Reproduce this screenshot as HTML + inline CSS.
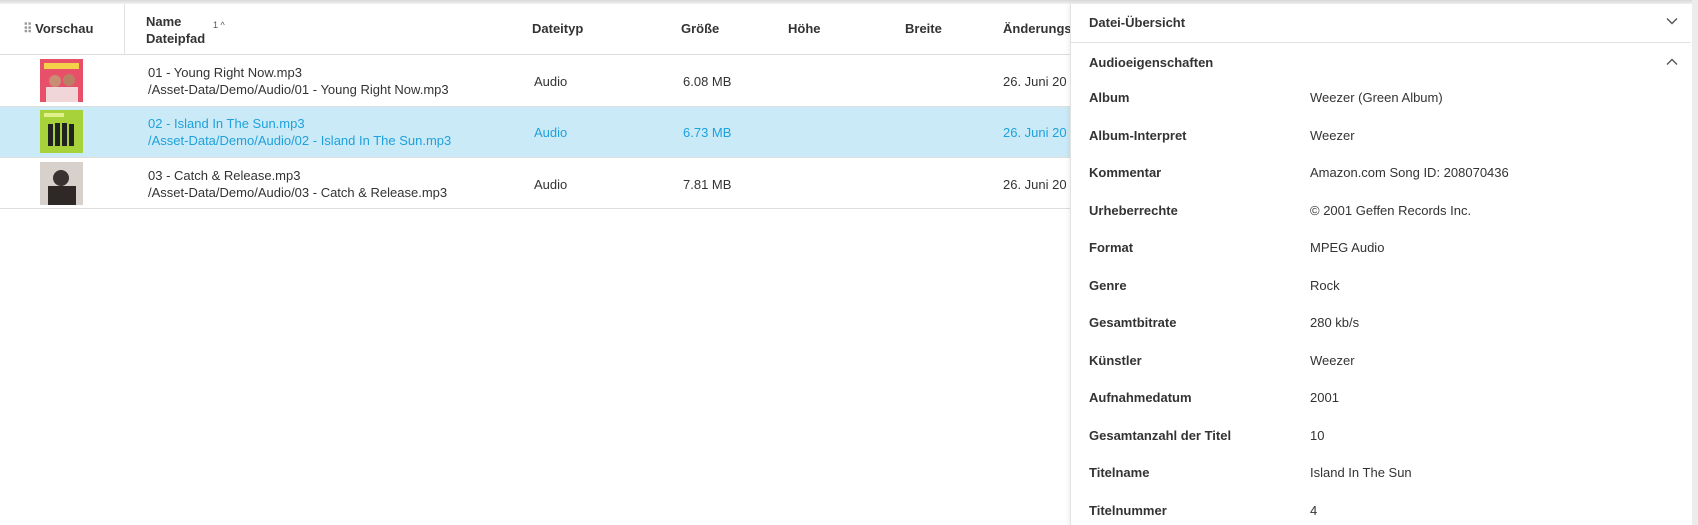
<!DOCTYPE html>
<html><head><meta charset="utf-8"><style>
*{box-sizing:border-box;margin:0;padding:0}
body{width:1698px;height:525px;overflow:hidden;background:#fff;font-family:"Liberation Sans",sans-serif;font-size:13px;color:#333;position:relative}
.top{position:absolute;left:0;top:0;width:1698px;height:4px;background:linear-gradient(#d8d8d8,#f2f2f2)}
.abs{position:absolute;white-space:nowrap}
.hdr{font-weight:bold;color:#333}
.line{position:absolute;left:0;width:1070px;height:1px;background:#dedede}
.sel{position:absolute;left:0;top:107px;width:1070px;height:50px;background:#cbeaf7}
.blue{color:#1ea1dc}
.panel{position:absolute;left:1070px;top:4px;width:620px;height:521px;background:#fff;border-left:1px solid #e2e2e2;box-shadow:-2px 0 4px rgba(0,0,0,.06)}
.lbl{position:absolute;left:18px;font-weight:bold;color:#333}
.val{position:absolute;left:239px;color:#333}
.sb{position:absolute;left:1692px;top:0;width:6px;height:525px;background:#ececec}
.th{position:absolute;left:40px;width:43px;height:43px}
</style></head><body>
<div class="top"></div>
<div class="abs hdr" style="left:23px;top:21px"><span style="color:#999;letter-spacing:-1px">⠿</span> Vorschau</div>
<div style="position:absolute;left:124px;top:4px;width:1px;height:50px;background:#e2e2e2"></div>
<div class="abs hdr" style="left:146px;top:13px;line-height:17px">Name<br>Dateipfad</div>
<div class="abs" style="left:213px;top:20px;font-size:9px;color:#555">1 ^</div>
<div class="abs hdr" style="left:532px;top:21px">Dateityp</div>
<div class="abs hdr" style="left:681px;top:21px">Größe</div>
<div class="abs hdr" style="left:788px;top:21px">Höhe</div>
<div class="abs hdr" style="left:905px;top:21px">Breite</div>
<div class="abs hdr" style="left:1003px;top:21px">Änderungs</div>
<div class="line" style="top:54px"></div>
<div class="sel"></div>
<div class="line" style="top:106px"></div>
<div class="line" style="top:157px"></div>
<div class="line" style="top:208px"></div>

<svg class="th" style="top:59px" viewBox="0 0 43 43"><rect width="43" height="43" fill="#e8506a"/><rect x="4" y="4" width="35" height="6" fill="#f5d04a"/><circle cx="15" cy="22" r="6" fill="#c98d74"/><circle cx="29" cy="21" r="6" fill="#b98066"/><rect x="6" y="28" width="32" height="15" fill="#f0d6d8"/></svg>
<div class="abs" style="left:148px;top:64px;line-height:17px">01 - Young Right Now.mp3<br>/Asset-Data/Demo/Audio/01 - Young Right Now.mp3</div>
<div class="abs" style="left:534px;top:74px">Audio</div>
<div class="abs" style="left:683px;top:74px">6.08 MB</div>
<div class="abs" style="left:1003px;top:74px">26. Juni 20</div>

<svg class="th" style="top:110px" viewBox="0 0 43 43"><rect width="43" height="43" fill="#a8d23a"/><rect x="4" y="3" width="20" height="4" fill="#e0f08a"/><rect x="8" y="14" width="5" height="22" fill="#222"/><rect x="15" y="13" width="5" height="23" fill="#222"/><rect x="22" y="13" width="5" height="23" fill="#222"/><rect x="29" y="14" width="5" height="22" fill="#222"/></svg>
<div class="abs blue" style="left:148px;top:115px;line-height:17px">02 - Island In The Sun.mp3<br>/Asset-Data/Demo/Audio/02 - Island In The Sun.mp3</div>
<div class="abs blue" style="left:534px;top:125px">Audio</div>
<div class="abs blue" style="left:683px;top:125px">6.73 MB</div>
<div class="abs blue" style="left:1003px;top:125px">26. Juni 20</div>

<svg class="th" style="top:162px" viewBox="0 0 43 43"><rect width="43" height="43" fill="#d8d0ca"/><circle cx="21" cy="16" r="8" fill="#3a3230"/><rect x="8" y="24" width="28" height="19" fill="#2e2826"/></svg>
<div class="abs" style="left:148px;top:167px;line-height:17px">03 - Catch &amp; Release.mp3<br>/Asset-Data/Demo/Audio/03 - Catch &amp; Release.mp3</div>
<div class="abs" style="left:534px;top:177px">Audio</div>
<div class="abs" style="left:683px;top:177px">7.81 MB</div>
<div class="abs" style="left:1003px;top:177px">26. Juni 20</div>

<div class="panel">
<div class="lbl" style="top:11px">Datei-Übersicht</div>
<svg style="position:absolute;left:595px;top:13px" width="12" height="8" viewBox="0 0 12 8"><path d="M1 1.5L6 6.5L11 1.5" fill="none" stroke="#555" stroke-width="1.4"/></svg>
<div style="position:absolute;left:0;top:38px;width:620px;height:1px;background:#e2e2e2"></div>
<div class="lbl" style="top:51px">Audioeigenschaften</div>
<svg style="position:absolute;left:595px;top:54px" width="12" height="8" viewBox="0 0 12 8"><path d="M1 6.5L6 1.5L11 6.5" fill="none" stroke="#555" stroke-width="1.4"/></svg>
<div class="lbl" style="top:86px">Album</div><div class="val" style="top:86px">Weezer (Green Album)</div>
<div class="lbl" style="top:124px">Album-Interpret</div><div class="val" style="top:124px">Weezer</div>
<div class="lbl" style="top:161px">Kommentar</div><div class="val" style="top:161px">Amazon.com Song ID: 208070436</div>
<div class="lbl" style="top:199px">Urheberrechte</div><div class="val" style="top:199px">© 2001 Geffen Records Inc.</div>
<div class="lbl" style="top:236px">Format</div><div class="val" style="top:236px">MPEG Audio</div>
<div class="lbl" style="top:274px">Genre</div><div class="val" style="top:274px">Rock</div>
<div class="lbl" style="top:311px">Gesamtbitrate</div><div class="val" style="top:311px">280 kb/s</div>
<div class="lbl" style="top:349px">Künstler</div><div class="val" style="top:349px">Weezer</div>
<div class="lbl" style="top:386px">Aufnahmedatum</div><div class="val" style="top:386px">2001</div>
<div class="lbl" style="top:424px">Gesamtanzahl der Titel</div><div class="val" style="top:424px">10</div>
<div class="lbl" style="top:461px">Titelname</div><div class="val" style="top:461px">Island In The Sun</div>
<div class="lbl" style="top:499px">Titelnummer</div><div class="val" style="top:499px">4</div>
</div>
<div class="sb"></div>
</body></html>
